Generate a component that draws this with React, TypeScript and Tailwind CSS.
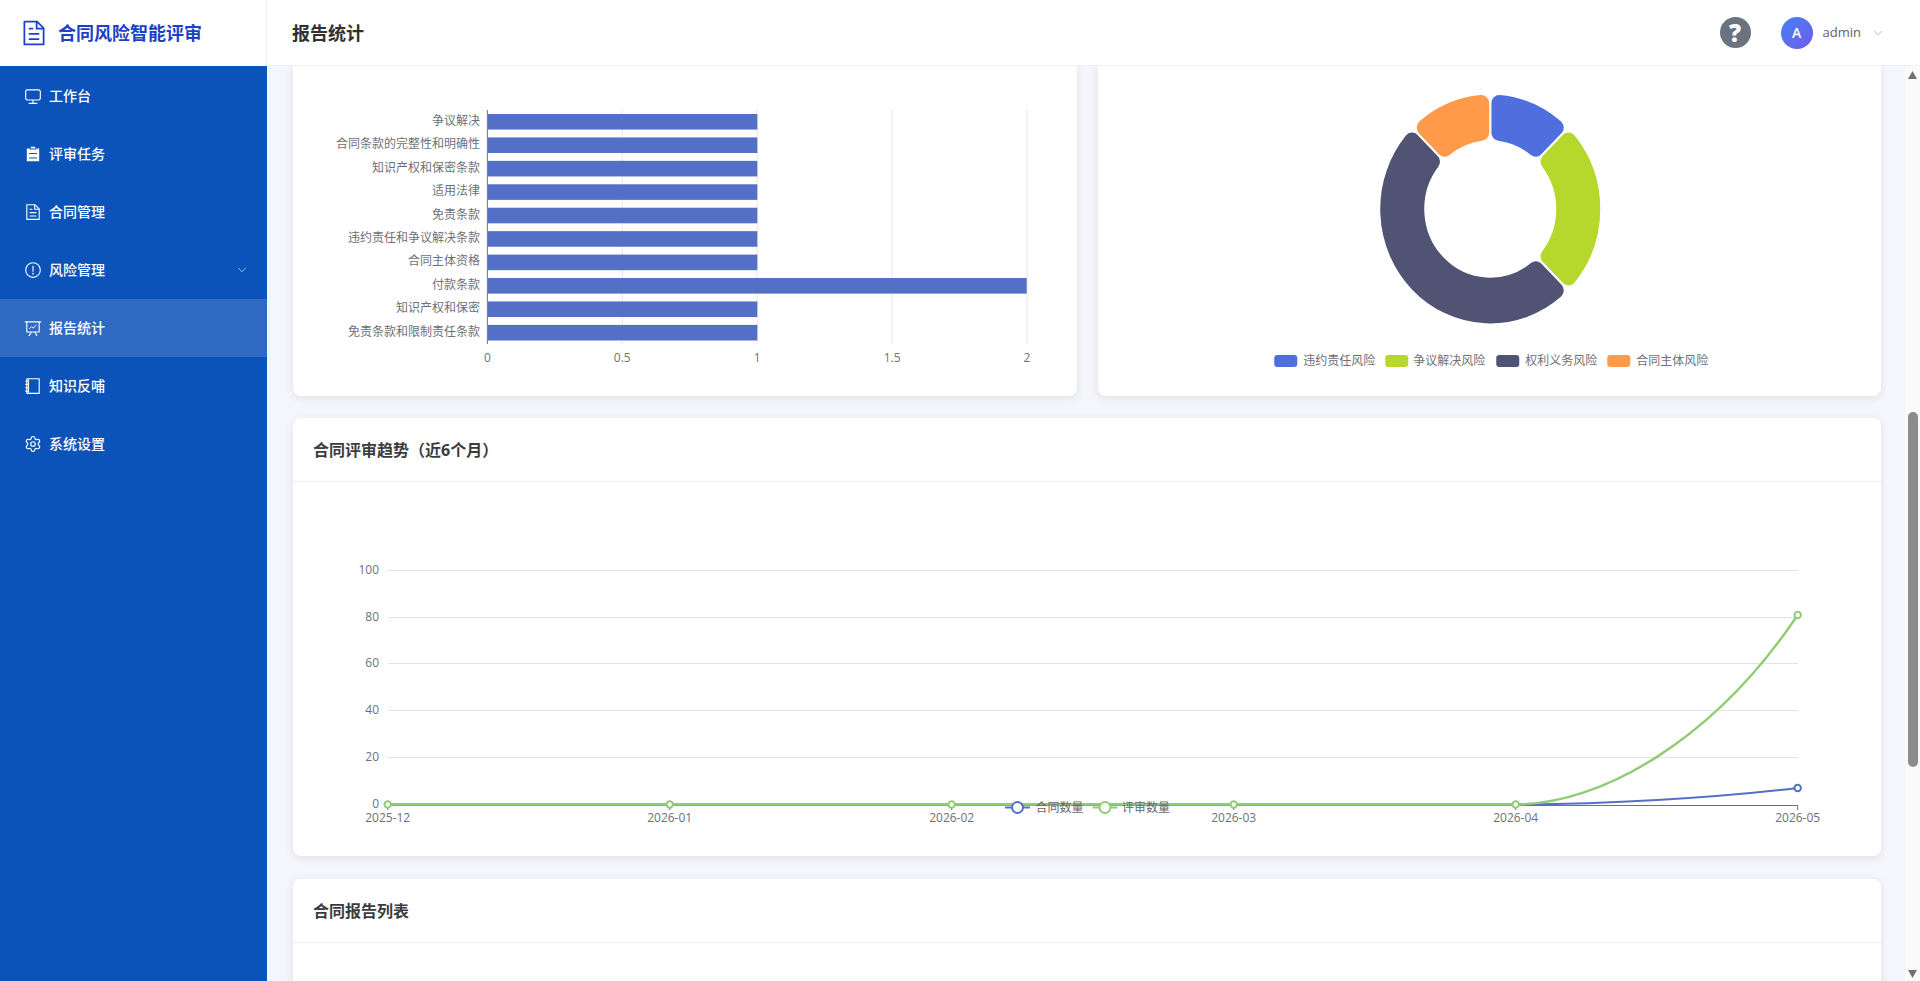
import { ChevronDown, Settings } from "lucide-react";
import type { ReactNode } from "react";

const FONT = '"Open Sans", "Noto Sans CJK SC", sans-serif';

function ElIcon({ children, className }: { children: ReactNode; className?: string }) {
    return (
        <svg viewBox="0 0 1024 1024" fill="currentColor" className={className}>
            {children}
        </svg>
    );
}

const docPath =
    "M832 384H576V128H192v768h640zm-26.496-64L640 154.496V320zM160 64h480l256 256v608a32 32 0 0 1-32 32H160a32 32 0 0 1-32-32V96a32 32 0 0 1 32-32m160 448h384v64H320zm0-192h160v64H320zm0 384h384v64H320z";

const navItems: { label: string; icon: ReactNode; active?: boolean; arrow?: boolean }[] = [
    {
        label: "工作台",
        icon: (
            <ElIcon className="w-[18px] h-[18px]">
                <path d="M544 768v128h192a32 32 0 1 1 0 64H288a32 32 0 1 1 0-64h192V768H192A128 128 0 0 1 64 640V256a128 128 0 0 1 128-128h640a128 128 0 0 1 128 128v384a128 128 0 0 1-128 128zM192 192a64 64 0 0 0-64 64v384a64 64 0 0 0 64 64h640a64 64 0 0 0 64-64V256a64 64 0 0 0-64-64z" />
            </ElIcon>
        ),
    },
    {
        label: "评审任务",
        icon: (
            <ElIcon className="w-[18px] h-[18px]">
                <path d="M704 192h160v736H160V192h160v64h384zM288 512h448v-64H288zm0 256h448v-64H288zm96-576V96h256v96z" />
            </ElIcon>
        ),
    },
    {
        label: "合同管理",
        icon: (
            <ElIcon className="w-[18px] h-[18px]">
                <path d={docPath} />
            </ElIcon>
        ),
    },
    {
        label: "风险管理",
        arrow: true,
        icon: (
            <ElIcon className="w-[18px] h-[18px]">
                <path d="M512 64a448 448 0 1 1 0 896 448 448 0 0 1 0-896m0 832a384 384 0 0 0 0-768 384 384 0 0 0 0 768m48-176a48 48 0 1 1-96 0 48 48 0 0 1 96 0m-48-464a32 32 0 0 1 32 32v288a32 32 0 0 1-64 0V288a32 32 0 0 1 32-32" />
            </ElIcon>
        ),
    },
    {
        label: "报告统计",
        active: true,
        icon: (
            <ElIcon className="w-[18px] h-[18px]">
                <path d="m665.216 768 110.848 192h-73.856L591.36 768H433.024L322.176 960H248.32l110.848-192H160a32 32 0 0 1-32-32V192H64a32 32 0 0 1 0-64h896a32 32 0 1 1 0 64h-64v544a32 32 0 0 1-32 32zM832 192H192v512h640z" />
                <path d="M300 560l130-130 100 90 170-190" fill="none" stroke="currentColor" strokeWidth="56" />
            </ElIcon>
        ),
    },
    {
        label: "知识反哺",
        icon: (
            <ElIcon className="w-[18px] h-[18px]">
                <path d="M192 128v768h640V128zm-32-64h704a32 32 0 0 1 32 32v832a32 32 0 0 1-32 32H160a32 32 0 0 1-32-32V96a32 32 0 0 1 32-32" />
                <path d="M224 128h64v768h-64zM96 192h128q32 0 32 32t-32 32H96q-32 0-32-32t32-32m0 192h128q32 0 32 32t-32 32H96q-32 0-32-32t32-32m0 192h128q32 0 32 32t-32 32H96q-32 0-32-32t32-32m0 192h128q32 0 32 32t-32 32H96q-32 0-32-32t32-32" />
            </ElIcon>
        ),
    },
    {
        label: "系统设置",
        icon: <Settings className="w-[18px] h-[18px]" strokeWidth={1.6} />,
    },
];

const barData: [string, number][] = [
    ["争议解决", 1],
    ["合同条款的完整性和明确性", 1],
    ["知识产权和保密条款", 1],
    ["适用法律", 1],
    ["免责条款", 1],
    ["违约责任和争议解决条款", 1],
    ["合同主体资格", 1],
    ["付款条款", 2],
    ["知识产权和保密", 1],
    ["免责条款和限制责任条款", 1],
];

// rounded ring slice, angles in degrees clockwise from 12 o'clock
function ringSlice(a0: number, a1: number, R: number, r: number, c: number) {
    const pt = (rad: number, deg: number) => {
        const t = (deg * Math.PI) / 180;
        return `${(rad * Math.sin(t)).toFixed(2)} ${(-rad * Math.cos(t)).toFixed(2)}`;
    };
    const dO = (Math.asin(c / (R - c)) * 180) / Math.PI;
    const dI = (Math.asin(c / (r + c)) * 180) / Math.PI;
    const radO = Math.sqrt((R - c) ** 2 - c ** 2);
    const radI = Math.sqrt((r + c) ** 2 - c ** 2);
    const large = a1 - a0 > 180 ? 1 : 0;
    return [
        `M${pt(radO, a0)}`,
        `A${c} ${c} 0 0 1 ${pt(R, a0 + dO)}`,
        `A${R} ${R} 0 ${large} 1 ${pt(R, a1 - dO)}`,
        `A${c} ${c} 0 0 1 ${pt(radO, a1)}`,
        `L${pt(radI, a1)}`,
        `A${c} ${c} 0 0 1 ${pt(r, a1 - dI)}`,
        `A${r} ${r} 0 ${large} 0 ${pt(r, a0 + dI)}`,
        `A${c} ${c} 0 0 1 ${pt(radI, a0)}`,
        "Z",
    ].join(" ");
}

const pieData = [
    { name: "违约责任风险", color: "#4f6fdf", from: 0, to: 45, sw: 1274, tx: 1303 },
    { name: "争议解决风险", color: "#b6d72b", from: 45, to: 135, sw: 1385, tx: 1413 },
    { name: "权利义务风险", color: "#505373", from: 135, to: 315, sw: 1496, tx: 1525 },
    { name: "合同主体风险", color: "#ff9a4a", from: 315, to: 360, sw: 1607, tx: 1636 },
];

function BarChart() {
    const ticks = [
        { x: 487.5, t: "0" },
        { x: 622.5, t: "0.5" },
        { x: 757.5, t: "1" },
        { x: 892.5, t: "1.5" },
        { x: 1027.5, t: "2" },
    ];
    return (
        <svg viewBox="293 66 784 330" className="block w-full h-[330px]">
            {ticks.slice(1).map((k) => (
                <line key={k.t} x1={k.x} x2={k.x} y1={110} y2={344} stroke="#e6e6e6" />
            ))}
            {barData.map(([name, v], i) => {
                const cy = 121.7 + i * 23.45;
                return (
                    <g key={name}>
                        <rect x={488} y={cy - 7.8} width={v * 269.6} height={15.6} fill="#5470c6" />
                        <text x={480} y={cy + 3} textAnchor="end" fontSize="12" fill="#6e7079">
                            {name}
                        </text>
                    </g>
                );
            })}
            <line x1={487.5} x2={487.5} y1={110} y2={344} stroke="#6e7079" />
            {ticks.map((k) => (
                <text key={k.t} x={k.x} y={362} textAnchor="middle" fontSize="12" fill="#6e7079">
                    {k.t}
                </text>
            ))}
        </svg>
    );
}

function PieChart() {
    return (
        <svg viewBox="1098 66 783 330" className="block w-full h-[330px]">
            <g transform="translate(1490 209) scale(1 1.04)">
                {pieData.map((p) => (
                    <path
                        key={p.name}
                        d={ringSlice(p.from, p.to, 111, 65, 9)}
                        fill={p.color}
                        stroke="#fff"
                        strokeWidth="2"
                    />
                ))}
            </g>
            {pieData.map((p) => (
                <g key={p.name}>
                    <rect x={p.sw} y={355} width={23} height={12} rx={3} fill={p.color} />
                    <text x={p.tx} y={365} fontSize="12" fill="#6e7079">
                        {p.name}
                    </text>
                </g>
            ))}
        </svg>
    );
}

function TrendChart() {
    const xs = [387.7, 669.7, 951.7, 1233.7, 1515.7, 1797.7];
    const labels = ["2025-12", "2026-01", "2026-02", "2026-03", "2026-04", "2026-05"];
    const ys = [
        { y: 570.5, t: "100" },
        { y: 617.5, t: "80" },
        { y: 663.5, t: "60" },
        { y: 710.5, t: "40" },
        { y: 757.5, t: "20" },
        { y: 804.5, t: "0" },
    ];
    return (
        <svg viewBox="293 482 1588 374" className="block w-full h-[374px]">
            {ys.slice(0, 5).map((g) => (
                <line key={g.t} x1={388} x2={1798} y1={g.y} y2={g.y} stroke="#e3e3e3" />
            ))}
            {ys.map((g) => (
                <text key={g.t} x={379} y={g.y + 3} textAnchor="end" fontSize="12" fill="#6e7079">
                    {g.t}
                </text>
            ))}
            <line x1={388} x2={1798} y1={805.5} y2={805.5} stroke="#6e7079" />
            {xs.map((x) => (
                <line key={x} x1={x} x2={x} y1={805} y2={810} stroke="#6e7079" />
            ))}
            {labels.map((t, i) => (
                <text key={t} x={xs[i]} y={822} textAnchor="middle" fontSize="12" fill="#6e7079">
                    {t}
                </text>
            ))}
            <path
                d="M387.7 804.5H1515.7C1601 804.5 1714 798 1797.7 788"
                fill="none"
                stroke="#5470c6"
                strokeWidth="2"
            />
            <circle cx={1797.7} cy={788} r={3.2} fill="#fff" stroke="#5470c6" strokeWidth="2" />
            <path
                d="M387.7 804.5H1515.7C1601 804.5 1714 740 1797.7 615"
                fill="none"
                stroke="#91cc75"
                strokeWidth="2.4"
            />
            {xs.map((x, i) => (
                <circle
                    key={x}
                    cx={x}
                    cy={i === 5 ? 615 : 804.5}
                    r={3.2}
                    fill="#fff"
                    stroke="#91cc75"
                    strokeWidth="2"
                />
            ))}
            {/* legend sits on top of the axis like in the real chart */}
            <line x1={1005} x2={1030} y1={807.5} y2={807.5} stroke="#5470c6" strokeWidth="2" />
            <circle cx={1017.5} cy={807.5} r={5.5} fill="#fff" stroke="#5470c6" strokeWidth="2" />
            <text x={1035.5} y={812} fontSize="12" fill="#666">
                合同数量
            </text>
            <line x1={1092.5} x2={1117.5} y1={807.5} y2={807.5} stroke="#91cc75" strokeWidth="2" />
            <circle cx={1105} cy={807.5} r={5.5} fill="#fff" stroke="#91cc75" strokeWidth="2" />
            <text x={1122} y={812} fontSize="12" fill="#666">
                评审数量
            </text>
        </svg>
    );
}

export default function App() {
    return (
        <div className="flex h-[981px] w-[1920px] overflow-hidden bg-[#f4f6fb]" style={{ fontFamily: FONT }}>
            {/* Sidebar */}
            <aside className="w-[267px] shrink-0 flex flex-col bg-[#0b53b8]">
                <div className="h-[66px] shrink-0 bg-white border-r border-[#f0f0f0] flex items-center pl-5 gap-[10px]">
                    <ElIcon className="w-7 h-7 text-[#1d3fd1]">
                        <path d={docPath} />
                    </ElIcon>
                    <span className="text-lg font-bold text-[#1c41c6]">合同风险智能评审</span>
                </div>
                <nav className="pt-px">
                    {navItems.map((item) => (
                        <div
                            key={item.label}
                            className={`h-[58px] flex items-center pl-6 pr-[18px] gap-[7px] text-sm font-medium text-white ${
                                item.active ? "bg-[#3069c2]" : ""
                            }`}
                        >
                            {item.icon}
                            <span className="flex-1">{item.label}</span>
                            {item.arrow && <ChevronDown className="w-3.5 h-3.5 text-white/70" strokeWidth={1.5} />}
                        </div>
                    ))}
                </nav>
            </aside>

            <div className="flex-1 min-w-0 flex flex-col">
                {/* Header */}
                <header className="h-[66px] shrink-0 bg-white border-b border-[#f0f0f0] flex items-center pl-[25px] pr-[35px]">
                    <h1 className="flex-1 text-lg font-bold text-[#303133]">报告统计</h1>
                    <div className="w-[31px] h-[31px] rounded-full bg-[#6b7280] flex items-center justify-center text-white text-2xl font-extrabold">
                        ?
                    </div>
                    <div className="ml-[30px] w-8 h-8 rounded-full bg-gradient-to-br from-[#3b82f6] to-[#6d5ae6] flex items-center justify-center text-white text-sm font-semibold">
                        A
                    </div>
                    <span className="ml-[10px] text-[13px] text-[#606266]">admin</span>
                    <ChevronDown className="ml-[10px] w-3.5 h-3.5 text-[#a8abb2]" strokeWidth={1.5} />
                </header>

                <div className="flex-1 min-h-0 flex">
                    {/* Content, scrolled down a bit */}
                    <main className="flex-1 min-w-0 overflow-hidden pl-[26px] pr-[24px] flex flex-col">
                        <div className="grid grid-cols-2 gap-[21px] shrink-0">
                            <div className="bg-white rounded-b-lg shadow-[0_2px_10px_rgba(0,0,0,0.09)]">
                                <BarChart />
                            </div>
                            <div className="bg-white rounded-b-lg shadow-[0_2px_10px_rgba(0,0,0,0.09)]">
                                <PieChart />
                            </div>
                        </div>

                        <section className="mt-[22px] shrink-0 bg-white rounded-lg shadow-[0_2px_10px_rgba(0,0,0,0.09)]">
                            <div className="h-[64px] border-b border-[#ebeef5] flex items-center pl-5">
                                <h2 className="text-base font-bold text-[#3a3c40]">合同评审趋势（近6个月）</h2>
                            </div>
                            <TrendChart />
                        </section>

                        <section className="mt-[23px] shrink-0 h-[300px] bg-white rounded-lg shadow-[0_2px_10px_rgba(0,0,0,0.09)]">
                            <div className="h-[64px] border-b border-[#ebeef5] flex items-center pl-5">
                                <h2 className="text-base font-bold text-[#3a3c40]">合同报告列表</h2>
                            </div>
                        </section>
                    </main>

                    {/* Scrollbar */}
                    <div className="w-[15px] shrink-0 bg-[#fafafb] flex flex-col items-end pr-[2px]">
                        <svg viewBox="0 0 9 8" className="mt-[5px] w-[9px] h-2 shrink-0 mr-[1px]" fill="#707070">
                            <path d="M4.5 0L9 8H0z" />
                        </svg>
                        <div className="mt-[333px] w-[10px] h-[355px] rounded-full bg-[#8c8c8c]" />
                        <div className="flex-1" />
                        <svg viewBox="0 0 9 8" className="mb-[3px] w-[9px] h-2 shrink-0 mr-[1px]" fill="#707070">
                            <path d="M0 0h9L4.5 8z" />
                        </svg>
                    </div>
                </div>
            </div>
        </div>
    );
}
